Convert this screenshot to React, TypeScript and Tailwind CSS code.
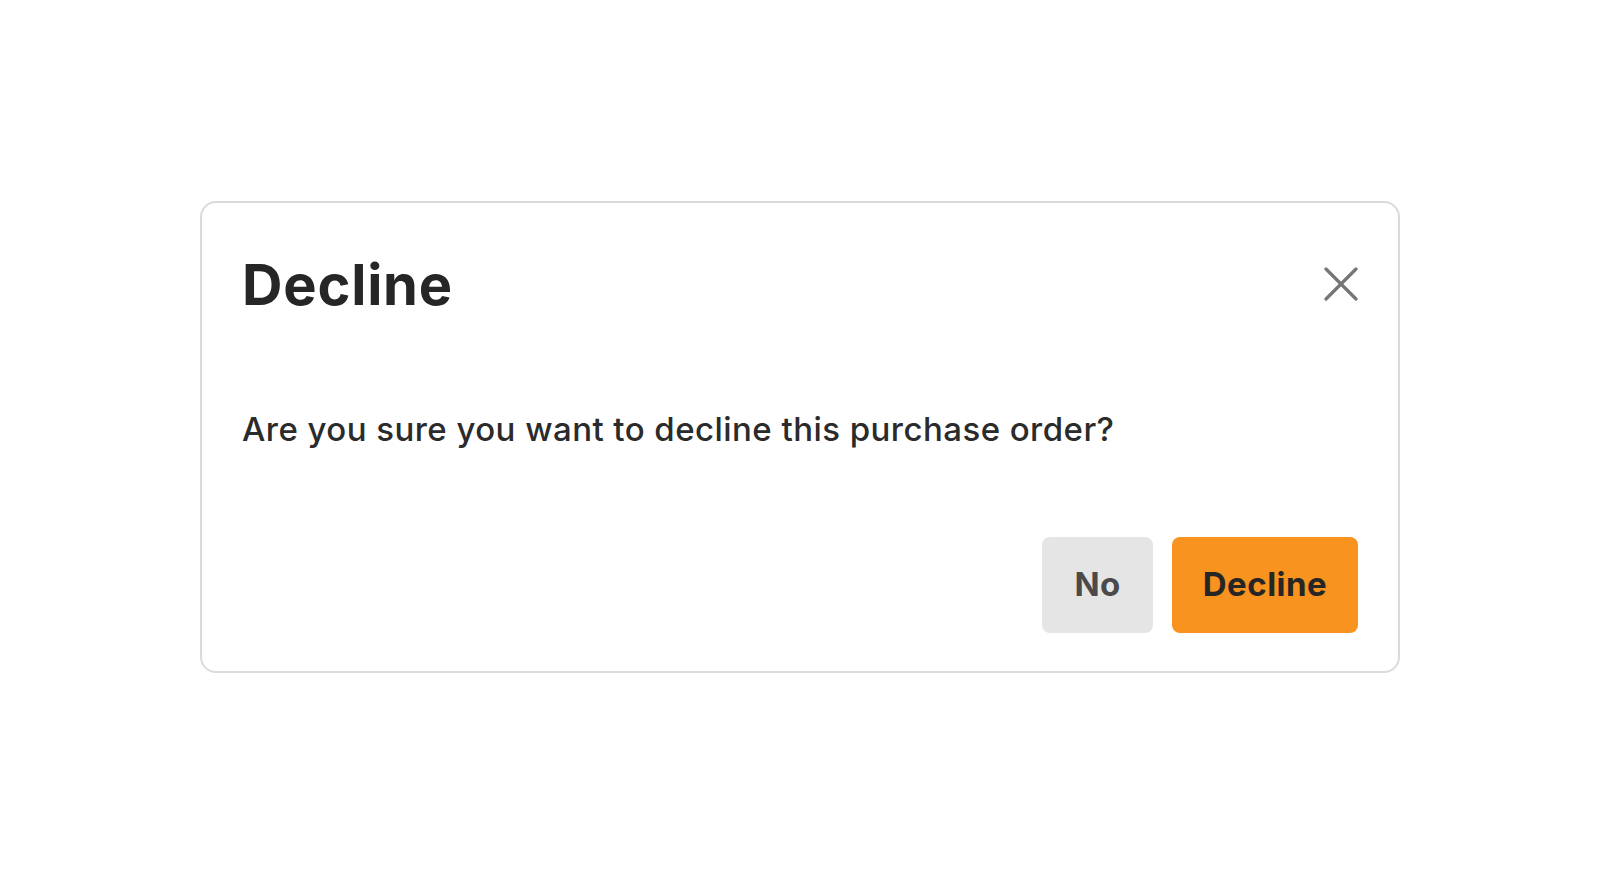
import React from "react";

export default function App() {
  return (
    <div
      className="w-full h-[873px] bg-white flex items-center justify-center"
      style={{ fontFamily: "Inter, 'Noto Sans', sans-serif" }}
    >
      <div className="w-[1200px] h-[472px] border-2 border-[#dadada] rounded-[16px] px-10 pt-[46px] pb-[38px] flex flex-col">
        <div className="flex items-start justify-between">
          <h1 className="text-[56px] leading-[72px] font-bold text-[#262626] tracking-[0.8px]">Decline</h1>
          <button className="mt-[18px] w-[34px] h-[34px] flex items-center justify-center text-[#767676]">
            <svg width="34" height="34" viewBox="0 0 34 34" fill="none" stroke="currentColor" strokeWidth="3.2" strokeLinecap="round">
              <path d="M2 2L32 32M32 2L2 32" />
            </svg>
          </button>
        </div>
        <p className="mt-[88px] text-[33px] leading-[40px] font-medium text-[#2b2b2b] tracking-[0.45px]">
          Are you sure you want to decline this purchase order?
        </p>
        <div className="mt-auto flex justify-end gap-[19px]">
          <button className="w-[111px] h-[96px] rounded-[8px] bg-[#e5e5e5] text-[#4a4a4a] text-[33px] font-bold tracking-[0.3px]">
            No
          </button>
          <button className="w-[186px] h-[96px] rounded-[8px] bg-[#f7931e] text-[#262626] text-[33px] font-bold tracking-[0.5px]">
            Decline
          </button>
        </div>
      </div>
    </div>
  );
}
